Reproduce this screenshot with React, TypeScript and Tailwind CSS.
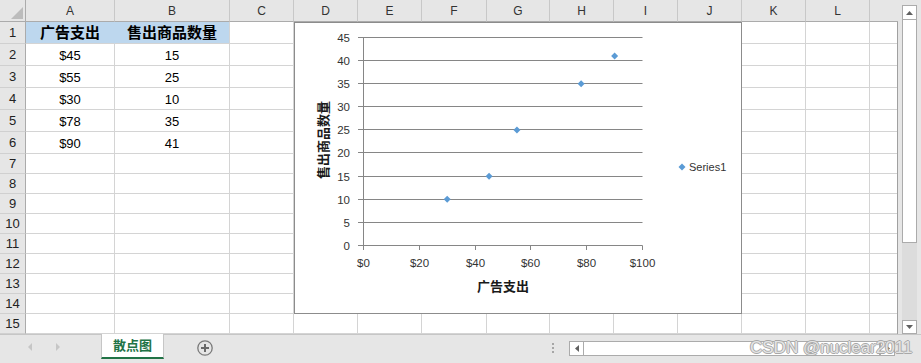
import React from 'react';

const LETTERS = ['A', 'B', 'C', 'D', 'E', 'F', 'G', 'H', 'I', 'J', 'K', 'L', 'M'];
const DATA: Record<number, [string, string]> = {
  2: ['$45', '15'],
  3: ['$55', '25'],
  4: ['$30', '10'],
  5: ['$78', '35'],
  6: ['$90', '41'],
};
const POINTS: [number, number][] = [
  [45, 15],
  [55, 25],
  [30, 10],
  [78, 35],
  [90, 41],
];
const GRID_Y = [223.5, 200.5, 177.5, 154.5, 130.5, 107.5, 84.5, 61.5, 38.5, 15.5];
const X_TICKS = [69.5, 125.5, 181.5, 236.5, 292.5, 348.5];
const X_LABELS = ['$0', '$20', '$40', '$60', '$80', '$100'];

function Chart() {
  const X0 = 69.5;
  const XS = 2.79;
  const Y0 = 223.5;
  const YS = 208 / 45;
  const grid = '#868686';
  const txt = '#333333';
  return (
    <div className="absolute left-[294px] top-[22px] w-[448px] h-[292px] bg-white">
      <svg
        width={448}
        height={292}
        className="block"
        fontFamily="'Liberation Sans','Noto Sans CJK SC',sans-serif"
      >
        <rect x={0.5} y={0.5} width={447} height={291} fill="#fff" stroke="#8c8c8c" />
        {GRID_Y.map((y, i) => (
          <g key={i}>
            <line x1={64} x2={348.5} y1={y} y2={y} stroke={grid} strokeWidth={1} />
            <text x={56} y={y + 4} fontSize={11.5} fill={txt} textAnchor="end">
              {i * 5}
            </text>
          </g>
        ))}
        <line x1={X0} x2={X0} y1={15} y2={224} stroke={grid} strokeWidth={1} />
        {X_TICKS.map((x, i) => (
          <g key={i}>
            <line x1={x} x2={x} y1={223.5} y2={228} stroke={grid} strokeWidth={1} />
            <text x={x} y={245} fontSize={11.5} fill={txt} textAnchor="middle">
              {X_LABELS[i]}
            </text>
          </g>
        ))}
        {POINTS.map(([vx, vy], i) => {
          const cx = X0 + vx * XS;
          const cy = Y0 - vy * YS;
          return (
            <polygon
              key={i}
              points={`${cx},${cy - 3.5} ${cx + 3.5},${cy} ${cx},${cy + 3.5} ${cx - 3.5},${cy}`}
              fill="#5b9bd5"
            />
          );
        })}
        <text
          x={209}
          y={264}
          fontSize={13}
          fontWeight="bold"
          fill="#1a1a1a"
          textAnchor="middle"
          dominantBaseline="central"
        >
          广告支出
        </text>
        <text
          x={29}
          y={118}
          fontSize={13}
          fontWeight="bold"
          fill="#1a1a1a"
          textAnchor="middle"
          dominantBaseline="central"
          transform="rotate(-90 29 118)"
        >
          售出商品数量
        </text>
        <polygon points="388,141.5 391.5,145 388,148.5 384.5,145" fill="#5b9bd5" />
        <text x={395} y={149} fontSize={11} fill={txt}>
          Series1
        </text>
      </svg>
    </div>
  );
}

function Cell({ r, ci }: { r: number; ci: number }) {
  if (r === 1 && ci < 2) {
    return (
      <div
        className={
          ci === 0
            ? 'bg-[#bdd7ee] border-r border-r-[#bdd7ee] border-b border-b-[#d4d4d4] flex items-center justify-center text-[15px] font-bold pt-px'
            : 'bg-[#bdd7ee] border-r border-r-[#d4d4d4] border-b border-b-[#d4d4d4] flex items-center justify-center text-[15px] font-bold pt-px'
        }
      >
        {ci === 0 ? '广告支出' : '售出商品数量'}
      </div>
    );
  }
  const d = DATA[r];
  return (
    <div className="border-r border-b border-[#d4d4d4] flex items-center justify-center text-[13px] pt-[3px]">
      {d && ci < 2 ? d[ci] : null}
    </div>
  );
}

export default function App() {
  const rows = Array.from({ length: 15 }, (_, i) => i + 1);
  return (
    <div className="w-[921px] h-[363px] overflow-hidden bg-[#e6e6e6] flex flex-col text-black [font-family:'Liberation_Sans','Noto_Sans_CJK_SC',sans-serif]">
      <div className="flex h-[334px] shrink-0">
        <div className="relative w-[898px] h-[334px] overflow-hidden">
          <div className="grid grid-cols-[26px_89px_115px_64px_64px_64px_65px_63px_64px_64px_64px_64px_64px_64px] h-[22px] bg-[#e6e6e6]">
            <div className="border-r border-[#ababab] border-b relative">
              <svg width={26} height={21} className="block">
                <polygon points="23,7 23,19 11,19" fill="#bcbcbc" />
              </svg>
            </div>
            {LETTERS.map((l) => (
              <div
                key={l}
                className="flex items-center justify-center pt-px border-r border-r-[#c8c8c8] border-b border-b-[#ababab] text-[12px] text-[#333]"
              >
                {l === 'M' ? null : l}
              </div>
            ))}
          </div>
          <div className="w-[898px] h-[312px] border-r border-[#a0a0a0] overflow-hidden bg-white">
            <div className="grid grid-cols-[26px_89px_115px_64px_64px_64px_65px_63px_64px_64px_64px_64px_64px_64px] grid-rows-[repeat(6,22px)_repeat(9,20px)]">
              {rows.map((r) => (
                <React.Fragment key={r}>
                  <div className="bg-[#e6e6e6] border-r border-r-[#ababab] border-b border-b-[#d0d0d0] flex items-center justify-center text-[13px] text-[#222] pt-px">
                    {r}
                  </div>
                  {LETTERS.map((l, ci) => (
                    <Cell key={l} r={r} ci={ci} />
                  ))}
                </React.Fragment>
              ))}
            </div>
          </div>
          <Chart />
        </div>
        <div className="w-[23px] flex flex-col pl-[4px] pt-[5px]">
          <div className="w-[15px] h-[15px] bg-white border border-[#ababab] flex items-center justify-center">
            <svg width={7} height={4} className="block">
              <polygon points="0,4 3.5,0 7,4" fill="#606060" />
            </svg>
          </div>
          <div className="w-[15px] h-[223px] bg-white border border-[#ababab] border-t-0" />
          <div className="w-[15px] flex-1 bg-[#dcdcdc]" />
          <div className="w-[15px] h-[14px] bg-white border border-[#ababab] flex items-center justify-center">
            <svg width={7} height={4} className="block">
              <polygon points="0,0 7,0 3.5,4" fill="#606060" />
            </svg>
          </div>
        </div>
      </div>
      <div className="relative h-[29px] flex items-start border-t border-[#c6c6c6]">
        <div className="w-[101px] h-[24px] flex items-center pl-[28px] gap-[24px]">
          <svg width={4} height={8} className="block">
            <polygon points="4,0 0,4 4,8" fill="#c6c6c6" />
          </svg>
          <svg width={4} height={8} className="block">
            <polygon points="0,0 4,4 0,8" fill="#c6c6c6" />
          </svg>
        </div>
        <div className="w-[63px] h-[25px] -mt-px bg-white border-x border-[#c6c6c6] border-b-2 border-b-[#217346] flex items-center justify-center text-[13px] font-bold text-[#217346]">
          散点图
        </div>
        <div className="ml-[33px] mt-[5px] w-[16px] h-[16px]">
          <svg width={16} height={16} className="block">
            <circle cx={8} cy={8} r={7.2} fill="none" stroke="#7a7a7a" strokeWidth={1.3} />
            <line x1={4} x2={12} y1={8} y2={8} stroke="#6a6a6a" strokeWidth={2} />
            <line x1={8} x2={8} y1={4} y2={12} stroke="#6a6a6a" strokeWidth={2} />
          </svg>
        </div>
        <div className="flex-1" />
        <div className="w-[373px] flex items-start pt-[6px]">
          <div className="ml-[4px] w-[2px] flex flex-col gap-[2px] pt-[2px]">
            <div className="w-[2px] h-[2px] bg-[#a6a6a6]" />
            <div className="w-[2px] h-[2px] bg-[#a6a6a6]" />
            <div className="w-[2px] h-[2px] bg-[#a6a6a6]" />
          </div>
          <div className="ml-[15px] w-[326px] h-[15px] flex bg-[#dcdcdc]">
            <div className="w-[15px] h-[15px] bg-white border border-[#ababab] flex items-center justify-center">
              <svg width={4} height={7} className="block">
                <polygon points="4,0 0,3.5 4,7" fill="#606060" />
              </svg>
            </div>
            <div className="flex-1 h-[15px] bg-white border border-l-0 border-[#ababab]" />
            <div className="w-[15px] h-[15px] bg-white border border-[#ababab] flex items-center justify-center">
              <svg width={4} height={7} className="block">
                <polygon points="0,0 4,3.5 0,7" fill="#606060" />
              </svg>
            </div>
          </div>
        </div>
        <div className="absolute left-[750px] top-[3px] text-[17px] leading-[20px] text-[#e4e4e4] [text-shadow:1px_0_#a8a8a8,-1px_0_#a8a8a8,0_1px_#a8a8a8,0_-1px_#a8a8a8] whitespace-nowrap">
          CSDN @nuclear2011
        </div>
      </div>
    </div>
  );
}
